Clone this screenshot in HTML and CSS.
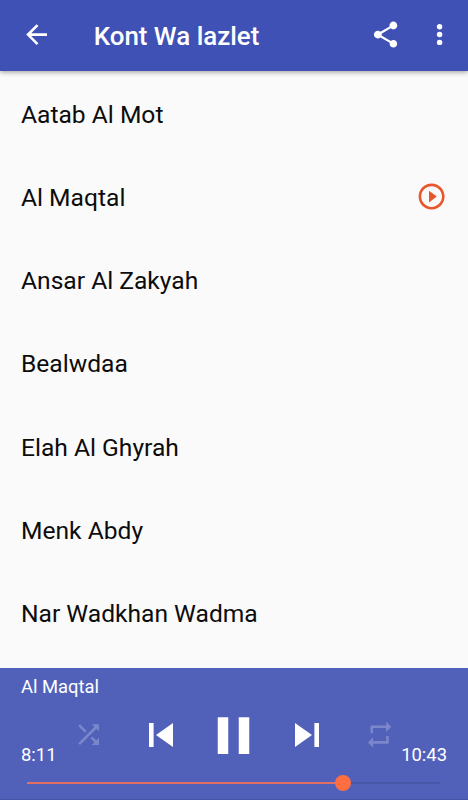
FILE: index.html
```html
<!DOCTYPE html>
<html lang="en">
<head>
<meta charset="utf-8">
<title>Kont Wa lazlet</title>
<link rel="stylesheet" href="styles.css">
</head>
<body>
<header class="toolbar">
  <svg class="icon" viewBox="0 0 24 24"><path d="M20 11H7.83l5.59-5.59L12 4l-8 8 8 8 1.41-1.41L7.83 13H20v-2z"/></svg>
  <h1 class="title">Kont Wa lazlet</h1>
  <svg class="icon share" viewBox="0 0 24 24"><path d="M18 16.08c-.76 0-1.44.3-1.96.77L8.91 12.7c.05-.23.09-.46.09-.7s-.04-.47-.09-.7l7.05-4.11c.54.5 1.25.81 2.04.81 1.66 0 3-1.34 3-3s-1.34-3-3-3-3 1.34-3 3c0 .24.04.47.09.7L8.04 9.81C7.5 9.31 6.79 9 6 9c-1.66 0-3 1.34-3 3s1.34 3 3 3c.79 0 1.5-.31 2.04-.81l7.12 4.16c-.05.21-.08.43-.08.65 0 1.61 1.31 2.92 2.92 2.92s2.92-1.31 2.92-2.92-1.31-2.92-2.92-2.92z"/></svg>
  <svg class="icon more" viewBox="0 0 24 24"><circle cx="12" cy="6" r="2.1"/><circle cx="12" cy="12" r="2.1"/><circle cx="12" cy="18" r="2.1"/></svg>
</header>
<ul class="tracks">
  <li class="track">Aatab Al Mot</li>
  <li class="track">Al Maqtal
    <svg class="icon playing" viewBox="0 0 24 24"><path d="M10 16.5l6-4.5-6-4.5v9zM12 2C6.48 2 2 6.48 2 12s4.48 10 10 10 10-4.48 10-10S17.52 2 12 2zm0 18c-4.41 0-8-3.59-8-8s3.59-8 8-8 8 3.59 8 8-3.59 8-8 8z"/></svg>
  </li>
  <li class="track">Ansar Al Zakyah</li>
  <li class="track">Bealwdaa</li>
  <li class="track">Elah Al Ghyrah</li>
  <li class="track">Menk Abdy</li>
  <li class="track">Nar Wadkhan Wadma</li>
</ul>
<footer class="player">
  <div class="now">Al Maqtal</div>
  <div class="controls">
    <span class="time">8:11</span>
    <div class="buttons">
      <span class="button"><svg class="icon dim" viewBox="0 0 24 24"><path d="M10.59 9.17L5.41 4 4 5.41l5.17 5.17 1.42-1.41zM14.5 4l2.04 2.04L4 18.59 5.41 20 17.96 7.46 20 9.5V4h-5.5zm.33 9.41l-1.41 1.41 3.13 3.13L14.5 20H20v-5.5l-2.04 2.04-3.13-3.13z"/></svg></span>
      <span class="button"><svg class="icon skip" viewBox="0 0 24 24"><path d="M6 6h2.3v12H6zm3.5 6l8.5 6V6z"/></svg></span>
      <span class="button"><svg class="icon pause" viewBox="0 0 24 24"><path d="M6 19h4V5H6v14zm8-14v14h4V5h-4z"/></svg></span>
      <span class="button"><svg class="icon skip" viewBox="0 0 24 24"><path d="M6 18l8.5-6L6 6v12zM15.7 6v12H18V6z"/></svg></span>
      <span class="button"><svg class="icon dim" viewBox="0 0 24 24"><path d="M7 7h10v3l4-4-4-4v3H5v6h2V7zm10 10H7v-3l-4 4 4 4v-3h12v-6h-2v4z"/></svg></span>
    </div>
    <span class="time">10:43</span>
  </div>
  <div class="seek"><div class="played"></div><div class="thumb"></div><div class="rest"></div></div>
</footer>
</body>
</html>
```
FILE: styles.css
```css
* { box-sizing: border-box; }
body {
  margin: 0;
  height: 800px;
  display: flex;
  flex-direction: column;
  overflow: hidden;
  background: #fafafa;
  color: #0c0c0c;
  font-family: Roboto, sans-serif;
}
.icon {
  display: block;
  flex: none;
  width: 31.2px;
  height: 31.2px;
  fill: currentColor;
}
.toolbar {
  position: relative;
  flex: none;
  height: 71px;
  display: flex;
  align-items: center;
  padding: 0 13px 1px 21px;
  background: #3f51b5;
  color: #fff;
  box-shadow: 0 1px 5px rgba(0, 0, 0, .4);
}
.title {
  flex: 1;
  margin: 2px 0 0 41.5px;
  font-size: 25.9px;
  font-weight: 500;
  line-height: 32px;
}
.more { margin-left: 23px; }
.tracks {
  flex: 1;
  margin: 0;
  padding: 1.7px 0 0;
  list-style: none;
}
.track {
  height: 83.2px;
  display: flex;
  align-items: center;
  justify-content: space-between;
  padding: 0 21px;
  font-size: 24.6px;
}
.playing {
  margin-bottom: 1.5px;
  color: #e8572a;
}
.player {
  flex: none;
  height: 132.5px;
  padding: 7px 21px 0;
  background: #5161ba;
  border-bottom: 1px solid #4655a5;
  color: #fff;
}
.now {
  font-size: 18.4px;
  line-height: 24px;
}
.controls {
  display: flex;
  justify-content: space-between;
  height: 73px;
}
.time {
  align-self: flex-end;
  width: 31px;
  margin-bottom: 4.5px;
  font-size: 18.4px;
  line-height: 24px;
  white-space: nowrap;
}
.time:last-child {
  display: flex;
  justify-content: flex-end;
}
.buttons {
  display: flex;
  align-items: center;
}
.button {
  width: 72.8px;
  display: flex;
  justify-content: center;
}
.dim { opacity: .24; }
.skip { width: 48px; height: 48px; }
.pause { width: 63px; height: 63px; }
.seek {
  display: flex;
  align-items: center;
  height: 16px;
  margin: 3.5px 7px 0 6px;
}
.played {
  width: 308px;
  height: 2.6px;
  background: #e36f62;
}
.thumb {
  width: 16px;
  height: 16px;
  border-radius: 50%;
  background: #ff6e40;
}
.rest {
  flex: 1;
  height: 2.6px;
  background: #4957a8;
}
```
